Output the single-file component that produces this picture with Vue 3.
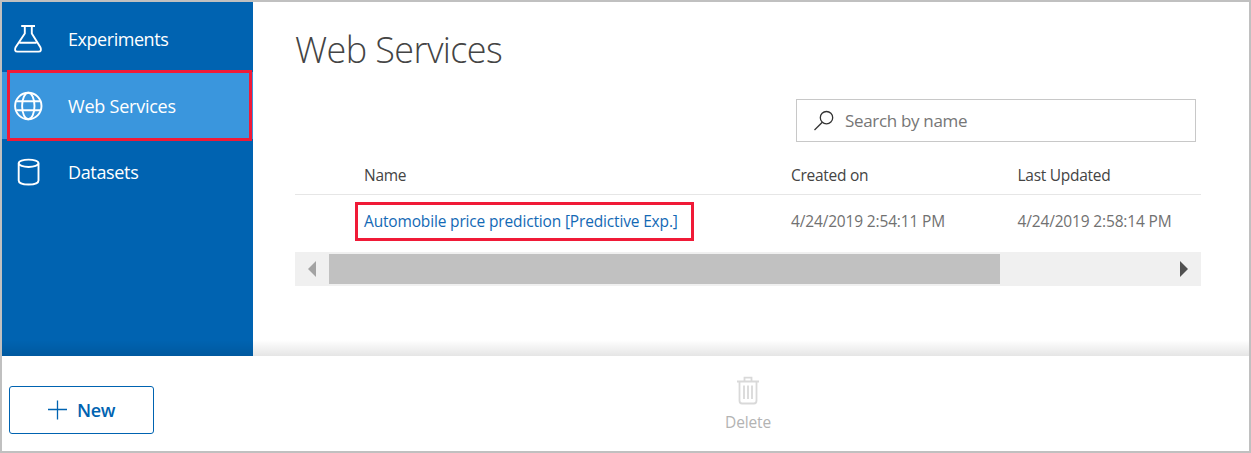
<script setup>
const items = [
  { id: 'experiments', label: 'Experiments' },
  { id: 'services', label: 'Web Services', active: true },
  { id: 'datasets', label: 'Datasets' },
]
</script>

<template>
  <div class="window">
    <div class="main">
      <nav class="sidebar">
        <div v-for="item in items" :key="item.id" class="item" :class="[item.id, { active: item.active }]">
          <svg v-if="item.id === 'experiments'" class="icon" viewBox="0 0 30 30">
            <path d="M8.200 2H22M11.800 2.500V9.500L2.500 23.500Q.9 27.600 4.500 27.600H25.500Q29.100 27.600 27.500 23.500L18.800 9.500V2.500M6.500 18.700H23.500" />
          </svg>
          <svg v-else-if="item.id === 'services'" class="icon globe" viewBox="0 0 30 30">
            <circle cx="15.300" cy="15" r="13.200" />
            <ellipse cx="15.300" cy="15" rx="6.200" ry="13.200" />
            <path d="M3.600 10.300H27M3.600 19.300H27" />
          </svg>
          <svg v-else class="icon" viewBox="0 0 30 30">
            <ellipse cx="15.600" cy="6.300" rx="9.900" ry="3.700" />
            <path d="M5.700 6.500V23.500C5.700 28.900 25.500 28.900 25.500 23.500V6.500" />
          </svg>
          <span class="label">{{ item.label }}</span>
        </div>
        <div class="marker"></div>
      </nav>
      <section class="content">
        <h1><span>Web Services</span></h1>
        <div class="search">
          <svg viewBox="0 0 22 22" class="glass">
            <circle cx="13.500" cy="7.700" r="6.200" />
            <path d="M9.300 12.200L1.500 20" />
          </svg>
          <span>Search by name</span>
        </div>
        <div class="row head">
          <span class="c1">Name</span><span class="c2">Created on</span><span>Last Updated</span>
        </div>
        <div class="row body">
          <div class="c1"><a class="link">Automobile price prediction [Predictive Exp.]</a></div>
          <span class="c2 date">4/24/2019 2:54:11 PM</span><span class="date">4/24/2019 2:58:14 PM</span>
        </div>
        <div class="scroll">
          <svg viewBox="0 0 34 34"><path d="M21 9V25L13 17Z" fill="#a3a3a3" /></svg>
          <div class="thumb"></div>
          <svg viewBox="0 0 34 34"><path d="M13 9V25L21 17Z" fill="#505050" /></svg>
        </div>
      </section>
      <div class="shade"></div>
    </div>
    <footer>
      <div class="new">
        <svg viewBox="0 0 20 20"><path d="M9.500 .5V19.500M0 9.500H19" /></svg>
        <span>New</span>
      </div>
      <div class="delete">
        <svg viewBox="0 0 24 30">
          <path d="M1 5.500H23M8.500 5V1.700H15.500V5M3.500 6V24.500Q3.500 27.500 6 27.500H18Q20.500 27.500 20.500 24.500V6" />
          <path d="M8 9.500V23M12 9.500V23M16 9.500V23" />
        </svg>
        <span>Delete</span>
      </div>
    </footer>
  </div>
</template>

<style>
body { margin: 0; }
</style>

<style scoped>
.window {
  box-sizing: border-box;
  width: 1251px;
  height: 453px;
  border: 2px solid #c0c0c0;
  background: #fff;
  font-family: "Open Sans", "Noto Sans", sans-serif;
  overflow: hidden;
}
.main { position: relative; display: flex; height: 354px; }
.sidebar { position: relative; width: 251px; background: #0063b1; }
.item { display: flex; align-items: center; height: 67px; color: #fff; }
.item.experiments { height: 70px; }
.icon { width: 30px; height: 30px; margin-left: 11px; fill: none; stroke: #fff; stroke-width: 1.9; }
.experiments .icon { margin-top: 4px; }
.experiments .label { margin-top: 3px; letter-spacing: -0.450px; }
.datasets .icon, .datasets .label { margin-top: -2px; }
.item.active { background: #3a96dd; }
.label { margin-left: 25px; font-size: 18px; line-height: 24px; letter-spacing: -0.350px; white-space: nowrap; }
.active .label { letter-spacing: -0.230px; }
.marker { position: absolute; left: 5px; top: 68px; width: 239px; height: 65px; border: 3px solid #f01a37; }
.content { width: 906px; padding-left: 42px; }
h1 { margin: 23px 0 0; height: 50px; font-size: 36px; line-height: 50px; font-weight: 300; color: #444; letter-spacing: -0.600px; }
.search {
  box-sizing: border-box; display: flex; align-items: center;
  width: 400px; height: 43px; margin: 24px 0 0 501px;
  border: 1px solid #c8c8c8; color: #767676; font-size: 17px; letter-spacing: -0.330px;
}
.glass { width: 22px; height: 22px; margin: 0 10px 0 16px; fill: none; stroke: #333; stroke-width: 1.300; }
.row { display: flex; align-items: center; font-size: 15.500px; white-space: nowrap; }
.head { box-sizing: border-box; height: 53px; padding: 13px 0 0 69px; border-bottom: 1px solid #e6e6e6; color: #444; letter-spacing: -0.270px; }
.body { height: 57px; padding-left: 60px; color: #717171; box-sizing: border-box; letter-spacing: -0.160px; }
.head .c1 { width: 427px; }
.body .c1 { width: 436px; }
.c2 { width: 226.500px; }
.link {
  box-sizing: border-box; display: block; width: 339px; height: 39px; padding-left: 6px;
  border: 3px solid #f01a37; color: #1369b5; line-height: 33px; margin-top: -5px;
}
.date { margin-top: -5px; }
.scroll { display: flex; justify-content: flex-start; align-items: center; height: 34px; background: #f0f0f0; }
.scroll svg { width: 34px; height: 34px; }
.thumb { width: 671px; height: 30px; margin-right: 167px; background: #c1c1c1; }
.shade { position: absolute; left: 0; right: 0; bottom: 0; height: 16px; background: linear-gradient(rgba(0, 0, 0, 0), rgba(0, 0, 0, 0.100)); }
footer { display: flex; align-items: flex-start; height: 95px; background: #fff; }
.new {
  box-sizing: border-box; display: flex; align-items: center; width: 145px; height: 48px; margin: 30px 0 0 7px;
  border: 1px solid #0063b1; border-radius: 3px; color: #0063b1; font-size: 18px; font-weight: 600; letter-spacing: -0.350px;
}
.new svg { width: 20px; height: 20px; margin: 0 9px 0 38px; stroke: #0063b1; stroke-width: 1.300; }
.delete { width: 60px; margin: 20px 0 0 564px; display: flex; flex-direction: column; align-items: center; color: #b3b3b3; font-size: 15.500px; letter-spacing: -0.150px; }
.delete svg { width: 24px; height: 30px; fill: none; stroke: #d9d9d9; stroke-width: 1.800; }
.delete span { line-height: 22px; margin-top: 5px; }
</style>
